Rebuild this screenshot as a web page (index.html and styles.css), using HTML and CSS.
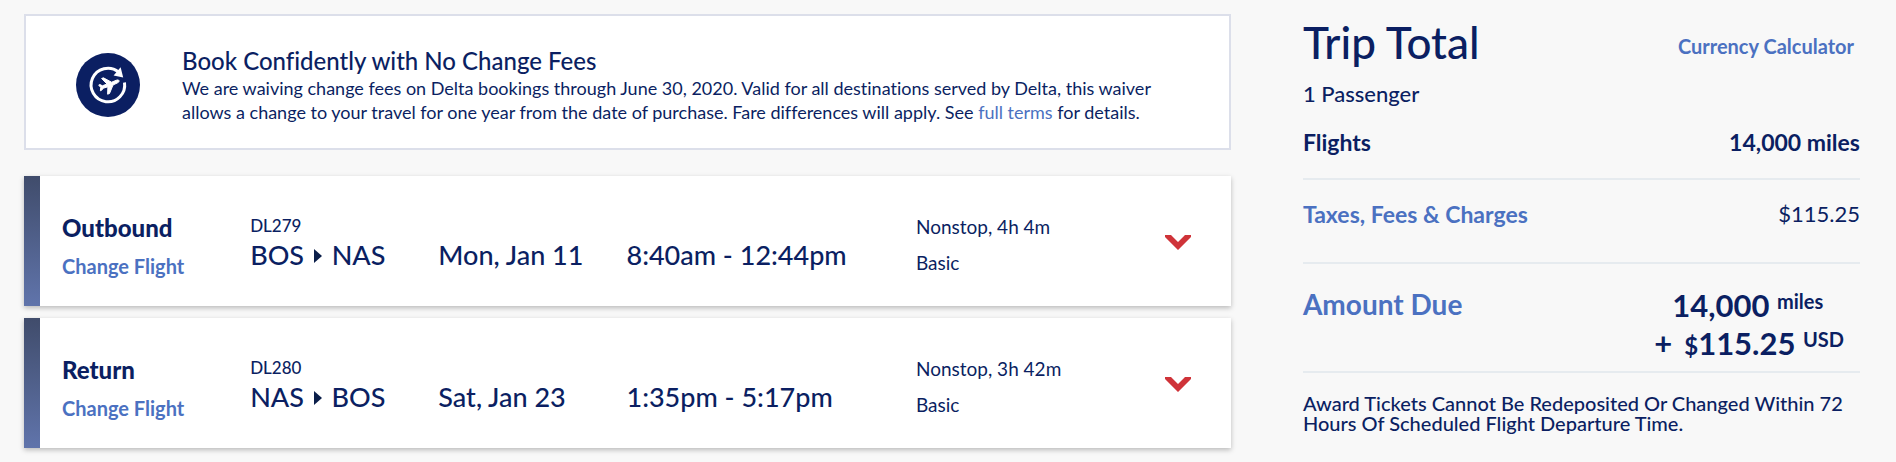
FILE: index.html
```
<!DOCTYPE html>
<html lang="en">
<head>
    <meta charset="UTF-8">
    <meta name="viewport" content="width=device-width, initial-scale=1.0">
    <title>Trip Summary</title>
    <link rel="stylesheet" href="styles.css">
</head>
<body>
    <div class="container">
        <main>
            <section class="notice">
                <svg class="notice-icon" viewBox="0 0 64 64" aria-hidden="true">
                    <circle cx="32" cy="32" r="32" fill="#0b1f62"/>
                    <path d="M48.5 29.5A16.8 16.8 0 1 1 42.5 19" fill="none" stroke="#fff" stroke-width="3"/>
                    <path d="M44.6 14.2L47.2 24.6L37.6 22.6Z" fill="#fff"/>
                    <path d="M43 27.6C42.6 26.6 41.2 26.9 40.2 27.3L35.6 29.2L27.4 24.8L25.6 25.5L31 31L26.4 32.8L23.9 31.5L22.7 32L24.7 34.5L24.4 37.8L25.6 37.3L27.3 35.2L31.9 33.8L31.6 41.2L33.5 40.5L37 32L41.6 29.8C42.6 29.3 43.4 28.6 43 27.6Z" fill="#fff" stroke="#fff" stroke-width="1"/>
                </svg>
                <div>
                    <h2>Book Confidently with No Change Fees</h2>
                    <p>We are waiving change fees on Delta bookings through June 30, 2020. Valid for all destinations served by Delta, this waiver allows a change to your travel for one year from the date of purchase. Fare differences will apply. See <a href="#">full terms</a> for details.</p>
                </div>
            </section>

            <section class="flight">
                <div class="direction">
                    <h3>Outbound</h3>
                    <a href="#">Change Flight</a>
                </div>
                <div class="big">
                    <p class="number">DL279</p>
                    <p>BOS <span class="arrow"></span> NAS</p>
                </div>
                <p class="big">Mon, Jan 11</p>
                <p class="big">8:40am - 12:44pm</p>
                <div class="details">
                    <p>Nonstop, 4h 4m</p>
                    <p>Basic</p>
                </div>
                <button class="toggle" aria-label="Show outbound details">
                    <svg viewBox="0 0 26 15"><path d="M0 0H6L13 7L20 0H26V2L13 15L0 2Z" fill="#cf3339"/></svg>
                </button>
            </section>

            <section class="flight">
                <div class="direction">
                    <h3>Return</h3>
                    <a href="#">Change Flight</a>
                </div>
                <div class="big">
                    <p class="number">DL280</p>
                    <p>NAS <span class="arrow"></span> BOS</p>
                </div>
                <p class="big">Sat, Jan 23</p>
                <p class="big">1:35pm - 5:17pm</p>
                <div class="details">
                    <p>Nonstop, 3h 42m</p>
                    <p>Basic</p>
                </div>
                <button class="toggle" aria-label="Show return details">
                    <svg viewBox="0 0 26 15"><path d="M0 0H6L13 7L20 0H26V2L13 15L0 2Z" fill="#cf3339"/></svg>
                </button>
            </section>
        </main>

        <aside>
            <div class="total-header">
                <h1>Trip Total</h1>
                <a href="#">Currency Calculator</a>
            </div>
            <p class="passengers">1 Passenger</p>
            <div class="row flights">
                <span>Flights</span>
                <span>14,000 miles</span>
            </div>
            <div class="row taxes">
                <a href="#">Taxes, Fees &amp; Charges</a>
                <span>$115.25</span>
            </div>
            <div class="row due">
                <h2>Amount Due</h2>
                <div class="amount">
                    <p class="miles">14,000 <span class="unit">miles</span></p>
                    <p><span class="plus">+</span><span class="dollar">$</span>115.25 <span class="unit">USD</span></p>
                </div>
            </div>
            <p class="terms">Award Tickets Cannot Be Redeposited Or Changed Within 72 Hours Of Scheduled Flight Departure Time.</p>
        </aside>
    </div>
</body>
</html>
```
FILE: styles.css
```
* {
    box-sizing: border-box;
}
body {
    font-family: Lato, "Open Sans", sans-serif;
    font-size: 18px;
    line-height: 24px;
    font-variant-ligatures: none;
    margin: 0;
    background-color: #f8f8f8;
    color: #0b1f62;
}
h1, h2, h3, p {
    margin: 0;
    font-weight: inherit;
}
a {
    color: #4b71c1;
    text-decoration: none;
}
a:hover {
    text-decoration: underline;
}
.container {
    display: grid;
    grid-template-columns: 13fr 6fr;
    column-gap: 72px;
    padding: 14px 36px 14px 24px;
}

/* change fee notice */
.notice {
    display: flex;
    align-items: center;
    gap: 42px;
    padding: 30px 60px 24px 50px;
    margin-bottom: 26px;
    background: white;
    border: 2px solid #dcdfea;
}
.notice-icon {
    width: 64px;
    height: 64px;
    flex-shrink: 0;
}
.notice h2 {
    font-size: 24px;
    line-height: 30px;
    font-weight: 500;
}

/* flight cards */
.flight {
    display: grid;
    grid-template-columns: 13fr 13fr 13fr 20fr 16fr 3fr;
    align-items: end;
    padding: 33px 40px 25px 38px;
    margin-bottom: 12px;
    background: linear-gradient(#404c6b, #6074ab) left / 16px 100% no-repeat white;
    box-shadow: 0 2px 5px rgba(0, 0, 0, 0.25);
}
.flight:last-child {
    margin-bottom: 0;
}
.direction h3 {
    font-size: 24px;
    line-height: 30px;
    margin-bottom: 8px;
    font-weight: 900;
}
.direction a {
    display: block;
    font-size: 20px;
    line-height: 30px;
    font-weight: bold;
}
.big {
    font-size: 27px;
    line-height: 36px;
    font-weight: 500;
    padding-bottom: 8px;
    white-space: nowrap;
}
.number {
    font-size: 17px;
    line-height: 22px;
}
.arrow {
    display: inline-block;
    margin: 0 3px;
    border-left: 8px solid #0b1f4a;
    border-top: 7px solid transparent;
    border-bottom: 7px solid transparent;
    vertical-align: 2px;
}
.details {
    font-size: 19px;
    line-height: 36px;
}
.toggle {
    align-self: center;
    justify-self: end;
    padding: 0 0 5px;
    border: none;
    background: none;
    cursor: pointer;
}
.toggle svg {
    display: block;
    width: 26px;
    height: 15px;
}

/* trip total */
.total-header {
    display: flex;
    justify-content: space-between;
    align-items: center;
    padding-right: 6px;
}
.total-header h1 {
    font-size: 44px;
    line-height: 56px;
    font-weight: 500;
}
.total-header a {
    font-size: 20px;
    font-weight: bold;
    padding-top: 8px;
}
.passengers {
    font-size: 22px;
    line-height: 48px;
    font-weight: 500;
}
.row {
    display: flex;
    justify-content: space-between;
    border-bottom: 2px solid #e6ebef;
    font-size: 22px;
}
.flights {
    font-size: 23px;
    line-height: 48px;
    padding-bottom: 12px;
    font-weight: bold;
}
.taxes {
    line-height: 48px;
    padding: 10px 0 24px;
}
.taxes a {
    font-size: 23px;
    font-weight: bold;
}
.due {
    padding: 22px 0 6px;
}
.due h2 {
    font-size: 28px;
    line-height: 36px;
    font-weight: bold;
    color: #4b71c1;
}
.amount {
    padding-right: 16px;
    font-size: 31px;
    line-height: 38px;
    font-weight: bold;
}
.miles {
    padding-left: 18px;
}
.unit {
    font-size: 20px;
    line-height: 20px;
    vertical-align: 8px;
}
.plus {
    margin-right: 12px;
}
.dollar {
    font-size: 24px;
}
.terms {
    padding-top: 20px;
    font-size: 20px;
    line-height: 20px;
    font-weight: 500;
}
```
